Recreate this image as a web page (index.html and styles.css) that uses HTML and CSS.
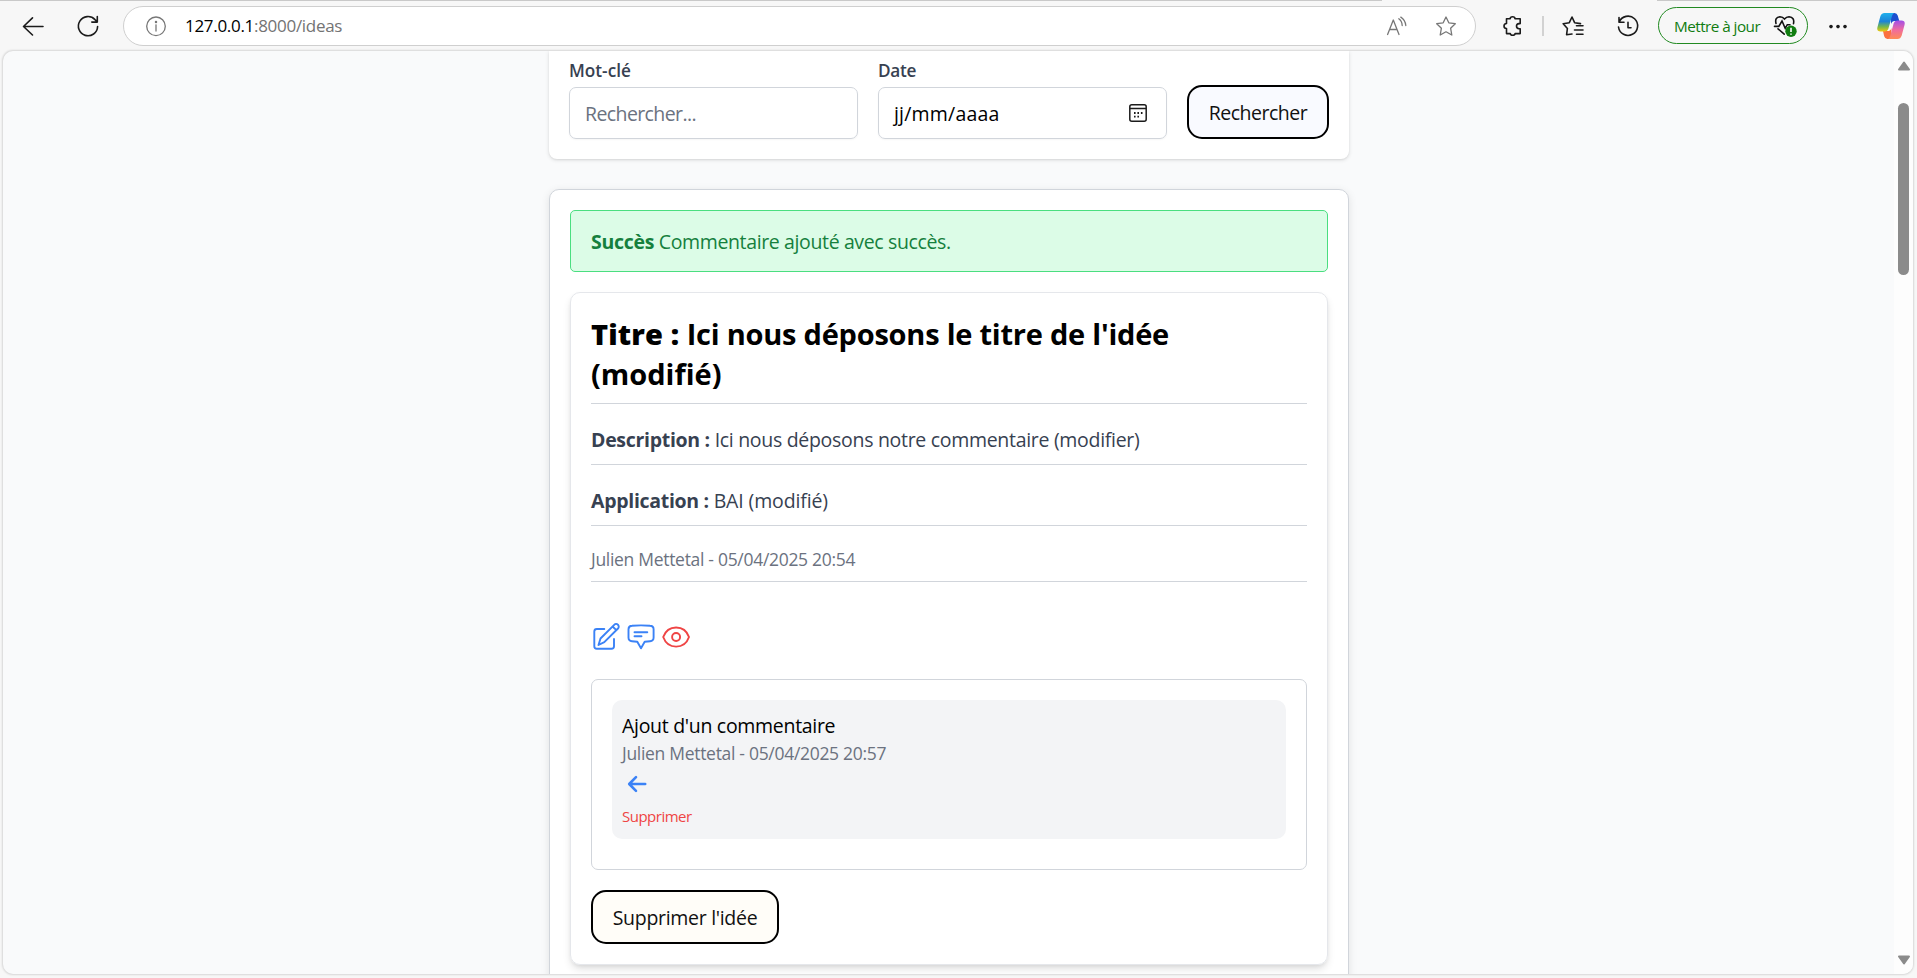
FILE: index.html
```html
<!DOCTYPE html>
<html lang="fr">
<head>
<meta charset="utf-8">
<title>Idées</title>
<link rel="stylesheet" href="styles.css">
</head>
<body>
<header class="toolbar">
  <svg class="ico back" viewBox="0 0 24 24"><path d="M22 12.5H2.5M11.5 3.8L2.5 12.5L11.5 21"/></svg>
  <svg class="ico reload" viewBox="0 0 24 24"><path d="M21.6 12.5A9.6 9.6 0 1 1 19 5.6L21 7.6M21.3 2.6V8.1H15.8"/></svg>
  <div class="address">
    <svg class="ico grey info" viewBox="0 0 24 24"><circle cx="12" cy="12.3" r="9.3"/><path d="M12 10.8V17"/><circle cx="12" cy="8" r=".6"/></svg>
    <span class="url"><b>127.0.0.1</b>:8000/ideas</span>
    <svg class="ico grey read" viewBox="0 0 24 24"><path d="M2.6 20.5L8.3 6L14 20.5M4.5 15.5H12M13.8 4.8Q17 7 17.2 11.5M15.8 3.1Q20.3 6 20.8 11.5"/></svg>
    <svg class="ico grey fav" viewBox="0 0 24 24"><path d="M12 3L14.8 8.8L21.3 9.7L16.6 14.2L17.8 21L12 17.8L6.2 21L7.4 14.2L2.7 9.7L9.2 8.8Z"/></svg>
  </div>
  <svg class="ico ext" viewBox="0 0 24 24"><path d="M5.5 4.7H9.2Q9.2 2.7 11.6 2.7Q14 2.7 14 4.7H19.2V9.6H18Q15.5 9.8 15.5 12Q15.5 14.5 18 14.7H19.2V19.6H14.1Q13.9 21.3 11.7 21.3Q9.5 21.3 9.3 19.6H5.5V14.5Q3 14.5 3 12Q3 9.7 5.5 9.5Z"/></svg>
  <i class="sep"></i>
  <svg class="ico list" viewBox="0 0 24 24"><path d="M11 20L5.6 20.7L6.4 14.5L2.2 9.7L8.3 8.7L11 3L13.6 8.7L19.5 9.6M15.5 11.7H22M13.5 16H22M15.5 20.2H22"/></svg>
  <svg class="ico hist" viewBox="0 0 24 24"><path d="M3 3.5V8.2H8M3.2 8A9.6 9.6 0 1 1 2.5 13M12 8.3V13.7H15"/></svg>
  <div class="update"><span>Mettre à jour</span>
    <svg class="health" viewBox="0 0 26 24"><path d="M3 9.5Q1.5 3.2 7 2.7Q9.8 2.7 11.5 5Q13.4 2.7 16 2.7Q21.8 3.3 20.5 9.7M1.5 12.4H5.8L9 7L12.2 14.3L14.3 10.7H17M5 14.8L11.2 20.2"/><circle cx="18" cy="17.2" r="5.7"/><path class="bang" d="M18 13.8V18M18 19.5V20.8"/></svg>
  </div>
  <svg class="dots" viewBox="0 0 24 24"><circle cx="5" cy="12.6" r="1.8"/><circle cx="12" cy="12.6" r="1.8"/><circle cx="19" cy="12.6" r="1.8"/></svg>
  <svg class="copilot" viewBox="0 0 28 26">
    <defs>
      <linearGradient id="ca" x1="0" y1="0" x2="0" y2="1"><stop offset="0" stop-color="#1fb0ec"/><stop offset=".45" stop-color="#1c83d8"/><stop offset=".75" stop-color="#79b947"/><stop offset="1" stop-color="#f3c70d"/></linearGradient>
      <linearGradient id="cb" x1="0" y1="0" x2="0" y2="1"><stop offset="0" stop-color="#a24ee8"/><stop offset=".5" stop-color="#ef6ba0"/><stop offset="1" stop-color="#ff8b54"/></linearGradient>
    </defs>
    <path fill="#1c4fcf" d="M14 0H17.5Q20 0 20.7 2.5L22.3 8H17.5Q15 8 14 11Z"/>
    <path fill="#fb6f3f" d="M6 18H12Q14 17 14.5 15L14 26H10.3Q8 26 7.2 23.3Z"/>
    <path fill="url(#ca)" d="M7.5 0H17.3Q15.7 .7 15 3L11.3 16Q10.5 18.6 7.5 18.6H3.5Q-.7 18.6 .5 14L3.3 3.6Q4.3 0 7.5 0Z"/>
    <path fill="url(#cb)" d="M20.5 26H10.7Q12.5 25.3 13.2 23L16.7 10.2Q17.5 7.6 20.3 7.6H24.5Q28.6 7.6 27.5 12L24.7 22.5Q23.5 26 20.5 26Z"/>
  </svg>
</header>
<main class="frame">
  <div class="page">
    <section class="search">
      <div class="field"><label>Mot-clé</label><div class="input placeholder"><span class="hint">Rechercher...</span></div></div>
      <div class="field"><label class="date">Date</label><div class="input"><span class="mask">jj/mm/aaaa</span>
        <svg class="cal" viewBox="0 0 18 18"><rect x=".8" y=".8" width="16.4" height="16.4" rx="2"/><path d="M1 4.5H17"/><path class="d" d="M5 9h1.6M8.4 9H10M11.9 9h1.6M5 12.6h1.6M8.4 12.6H10"/></svg></div></div>
      <div class="btn go"><span>Rechercher</span></div>
    </section>
    <section class="ideas">
      <div class="alert"><strong>Succès</strong> <span class="message">Commentaire ajouté avec succès.</span></div>
      <article class="idea">
        <h2><b>Titre :</b> Ici nous déposons le titre de l'idée<br><span class="edited">(modifié)</span></h2>
        <p class="row"><strong>Description :</strong> <span class="description">Ici nous déposons notre commentaire (modifier)</span></p>
        <p class="row"><strong>Application :</strong> <span class="app">BAI (modifié)</span></p>
        <p class="row meta">Julien Mettetal - 05/04/2025 20:54</p>
        <div class="actions">
          <svg viewBox="0 0 30 30"><path d="M13.3 8H5.8Q3.3 8 3.3 10.5V25.3Q3.3 27.8 5.8 27.8H20.5Q23 27.8 23 25.3V18"/><path d="M7.5 24L9.5 17.5L23.2 3.8A2.6 2.6 0 0 1 27 7.5L13.3 21.2ZM21.6 5.5L25.3 9.1"/></svg>
          <svg viewBox="0 0 30 30"><path d="M6 4.8Q15 3.9 24 4.8Q27.6 5 27.6 8.3V16.5Q27.6 20 24 20.3L18.7 20.7L15 27.2L11.3 20.7L6 20.3Q2.5 20 2.5 16.5V8.3Q2.5 5 6 4.8ZM8.5 11.3H21.3M8.5 15.2H15.5"/></svg>
          <svg class="eye" viewBox="0 0 30 30"><path d="M2.2 16C4.5 9.8 9.5 6.5 15.1 6.5S25.8 9.8 28 16C25.8 22.3 20.7 25.6 15.1 25.6S4.5 22.3 2.2 16Z"/><circle cx="15.1" cy="16" r="4"/></svg>
        </div>
        <div class="comments">
          <div class="comment">
            <p>Ajout d'un commentaire</p>
            <p class="meta">Julien Mettetal - 05/04/2025 20:57</p>
            <svg class="reply" viewBox="0 0 20 18"><path d="M18.2 9H2.3M9 2.2L2.2 9L9 15.8"/></svg>
            <a class="del">Supprimer</a>
          </div>
        </div>
        <div class="btn remove"><span>Supprimer l'idée</span></div>
      </article>
    </section>
  </div>
  <div class="scroll">
    <svg class="arrow" viewBox="0 0 14 10"><path d="M7 1.5L12 8.5H2Z"/></svg>
    <i class="thumb"></i>
    <svg class="arrow down" viewBox="0 0 14 10"><path d="M7 8.5L12 1.5H2Z"/></svg>
  </div>
</main>
</body>
</html>
```

FILE: styles.css
```css
* { box-sizing: border-box; margin: 0; padding: 0; }
body { width: 1917px; height: 978px; overflow: hidden; background: #f7f7f7; display: flex; flex-direction: column; font: 19.5px/30px "Open Sans", "Noto Sans", sans-serif; letter-spacing: -.3px; color: #000; }
svg { display: block; flex: none; }
span, strong, b { white-space: nowrap; }

.toolbar { height: 51px; display: flex; align-items: center; padding: 0 0 0 21px; flex: none;
  background: linear-gradient(#c9c9c9, #c9c9c9) 0 0 / 1382px 1px no-repeat, linear-gradient(#c9c9c9, #c9c9c9) 1657px 0 / 260px 1px no-repeat, #f7f7f7; }
.ico { width: 24px; height: 24px; fill: none; stroke: #1b1b1b; stroke-width: 1.6; stroke-linejoin: round; stroke-linecap: round; }
.grey { stroke: #777; stroke-width: 1.3; }
.reload { margin-left: 31px; }
.address { margin-left: 23px; width: 1353px; height: 40px; background: #fff; border: 1px solid #cfcfcf; border-radius: 20px; display: flex; align-items: center; padding-left: 20px; flex: none; }
.url { margin-left: 17px; font-size: 17px; line-height: 24px; color: #737373; flex: 1; }
.url b { color: #000; font-weight: 400; }
.read { margin-right: 25px; }
.fav { margin-right: 17px; }
.ext { margin-left: 25px; }
.sep { width: 2px; height: 20px; background: #d2d2d2; margin-left: 17px; flex: none; }
.list { margin-left: 17px; }
.hist { margin-left: 31px; }
.update { margin-left: 18px; width: 150px; height: 37px; border: 1.5px solid #218a21; border-radius: 19px; color: #107c10; font-size: 15.3px; display: flex; align-items: center; padding-left: 15px; flex: none; letter-spacing: -.55px; }
.update span { width: 99px; line-height: 24px; }
.health { width: 26px; height: 24px; fill: none; stroke: #111; stroke-width: 1.6; stroke-linecap: round; }
.health circle { fill: #107c10; stroke: none; }
.health .bang { stroke: #fff; stroke-linecap: butt; }
.dots { width: 24px; height: 24px; margin-left: 18px; fill: #1b1b1b; }
.copilot { width: 28px; height: 26px; margin-left: 27px; }

.frame { width: 1910px; height: 923px; margin-left: 3px; border-radius: 10px; background: #f9fafb; display: flex; overflow: hidden; box-shadow: 0 0 2px 1px rgba(0,0,0,.13); flex: none; }
.page { width: 1891px; padding-left: 546px; height: 923px; overflow: hidden; }
.scroll { width: 19px; background: #fdfdfd; display: flex; flex-direction: column; align-items: center; padding: 10px 0 9px; }
.arrow { width: 14px; height: 10px; fill: #8b8b8b; stroke: #8b8b8b; stroke-width: 2; stroke-linejoin: round; }
.thumb { width: 11px; height: 172px; border-radius: 6px; background: #8b8b8b; margin-top: 32px; }
.down { margin-top: auto; }

.search { width: 800px; height: 108px; background: #fff; border-radius: 0 0 8px 8px; box-shadow: 0 1px 4px rgba(0,0,0,.12), 0 1px 2px rgba(0,0,0,.06); padding: 4px 20px 20px; display: flex; gap: 20px; align-items: flex-end; }
.field { width: 289px; }
label { display: block; font-weight: 600; font-size: 17.2px; line-height: 25px; height: 32px; padding-top: 3px; color: #374151; letter-spacing: 0; }
.date { letter-spacing: -.3px; }
.input { height: 52px; border: 1px solid #d1d5db; border-radius: 7px; display: flex; align-items: center; justify-content: space-between; padding: 1px 19px 0 15px; box-shadow: 0 1px 2px rgba(0,0,0,.04); }
.placeholder { color: #6b7280; }
.hint { letter-spacing: -.6px; }
.mask { letter-spacing: .2px; }
.cal { width: 18px; height: 18px; fill: none; stroke: #1b1b1b; stroke-width: 1.5; position: relative; top: -1px; }
.cal .d { stroke-width: 1.8; }
.btn { height: 54px; border: 2px solid #000; border-radius: 15px; display: flex; align-items: center; justify-content: center; color: #111; padding-top: 2px; }
.go { width: 142px; background: #f9faff; letter-spacing: -.5px; }
.ideas { width: 800px; height: 900px; margin-top: 30px; background: #fff; border: 1px solid #d1d5db; border-radius: 10px; padding: 20px; box-shadow: 0 2px 8px rgba(0,0,0,.1); }
.alert { height: 62px; background: #dcfce7; border: 1px solid #4ade80; border-radius: 5px; color: #15803d; padding: 16px 20px 0; }
.message { letter-spacing: -.37px; }
.idea { margin-top: 20px; height: 673px; border: 1px solid #e5e7eb; border-radius: 10px; padding: 20px; box-shadow: 0 5px 8px -1px rgba(0,0,0,.12), 0 2px 5px -2px rgba(0,0,0,.1); }
h2 { font-size: 29px; line-height: 40px; font-weight: 700; height: 91px; padding-top: 1px; border-bottom: 1px solid #d1d5db; white-space: nowrap; letter-spacing: -.23px; }
h2 b { font-weight: 800; letter-spacing: .15px; }
.edited { letter-spacing: 0; }
.row { margin-top: 20px; height: 41px; padding-top: 1px; border-bottom: 1px solid #d1d5db; color: #374151; white-space: nowrap; }
.app { letter-spacing: -.13px; }
.meta { font-size: 17.5px; line-height: 25px; color: #6b7280; white-space: nowrap; }
.row.meta { height: 36px; }
.actions { display: flex; gap: 5px; margin-top: 39px; }
.actions svg { width: 30px; height: 30px; fill: none; stroke: #3b82f6; stroke-width: 1.9; stroke-linecap: round; stroke-linejoin: round; }
.actions .eye { stroke: #ef4444; }
.comments { margin-top: 28px; height: 191px; border: 1px solid #d1d5db; border-radius: 7px; padding: 20px; }
.comment { height: 139px; background: #f3f4f6; border-radius: 10px; padding: 11px 10px 0; }
.reply { width: 20px; height: 18px; margin: 9px 0 0 5px; fill: none; stroke: #3b82f6; stroke-width: 2.6; stroke-linecap: round; stroke-linejoin: round; }
.del { display: block; font-size: 15px; line-height: 25px; margin-top: 11px; color: #ef4444; letter-spacing: -.5px; }
.remove { width: 188px; margin-top: 20px; background: #fffdf8; }
```
